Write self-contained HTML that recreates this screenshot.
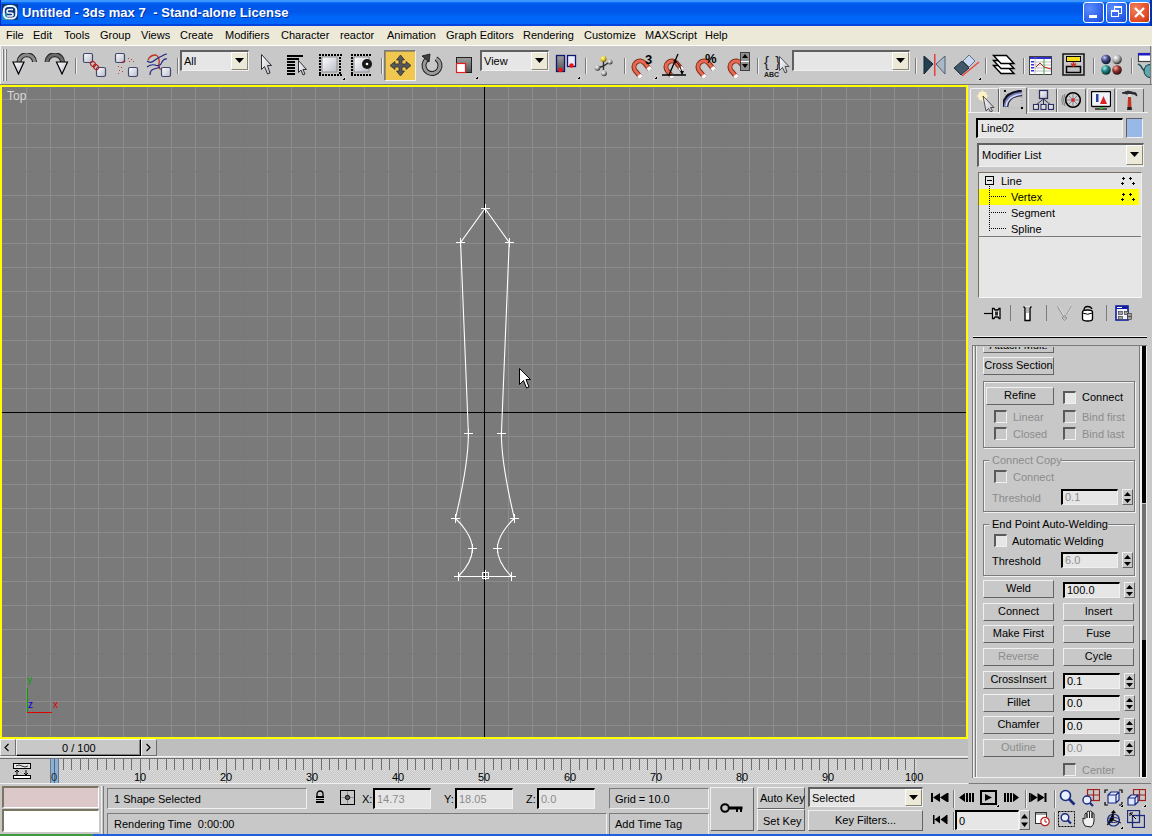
<!DOCTYPE html><html><head><meta charset="utf-8"><style>
*{margin:0;padding:0;box-sizing:border-box}
html,body{width:1152px;height:836px;overflow:hidden;background:#c8c8c8;font-family:"Liberation Sans",sans-serif;font-size:11px;position:relative}
div{position:absolute}
.t{white-space:nowrap;line-height:1}
.btn{background:#c8c8c8;border-top:1px solid #f0f0f0;border-left:1px solid #f0f0f0;border-bottom:1px solid #646464;border-right:1px solid #646464}
.fld{background:#e6e6e6;border-top:2px solid #000;border-left:2px solid #000;border-bottom:1px solid #f0f0f0;border-right:1px solid #f0f0f0}
.sunk{border-top:1px solid #7a7a7a;border-left:1px solid #7a7a7a;border-bottom:1px solid #f0f0f0;border-right:1px solid #f0f0f0}
</style></head><body>
<div style="left:0;top:0;width:1152px;height:26px;background:linear-gradient(#3d95ff 0,#3d95ff 2px,#1a7af8 2px,#0062f4 3px,#0058ea 5px,#0058ea 12px,#005eee 14px,#0066fa 17px,#0066fa 24px,#0048e0 24px,#0040d8 26px)"></div>
<div style="left:0;top:0;width:1px;height:26px;background:#0028c0"></div>
<div style="left:1150px;top:0;width:2px;height:26px;background:#0030b0"></div>
<svg style="position:absolute;left:2px;top:4px" width="16" height="16"><rect x="0" y="0" width="16" height="16" fill="#0c3a78"/><rect x="0" y="9" width="5" height="7" fill="#1890b8"/><rect x="1.8" y="2" width="12.5" height="12.5" rx="4.5" fill="none" stroke="#f0f4ff" stroke-width="2"/><path d="M11 5.5H7Q5 5.5 5 7.5Q5 9 7 9H9Q11 9 11 10.5Q11 12 9 12H5" fill="none" stroke="#f0f4ff" stroke-width="1.6"/></svg>
<div class="t" style="left:22px;top:6px;font-size:13px;color:#fff;font-weight:bold;letter-spacing:0.05px;text-shadow:1px 1px 0 #0030a0">Untitled - 3ds max 7 &nbsp;- Stand-alone License</div>
<div style="left:1083px;top:2px;width:21px;height:21px;border:1px solid #fff;border-radius:3px;background:radial-gradient(circle at 30% 30%,#5a8cff,#2a5ee8 70%,#1c48d0)"></div>
<div style="left:1106px;top:2px;width:21px;height:21px;border:1px solid #fff;border-radius:3px;background:radial-gradient(circle at 30% 30%,#5a8cff,#2a5ee8 70%,#1c48d0)"></div>
<div style="left:1089px;top:15px;width:8px;height:3px;background:#fff"></div>
<div style="left:1114px;top:6px;width:8px;height:8px;border:1px solid #fff;border-top-width:2px"></div>
<div style="left:1111px;top:10px;width:8px;height:7px;border:1px solid #fff;border-top-width:2px;background:#3a6cf0"></div>
<div style="left:1129px;top:2px;width:21px;height:21px;border:1px solid #fff;border-radius:3px;background:radial-gradient(circle at 30% 30%,#f08060,#e04820 70%,#c03010)"></div>
<svg style="position:absolute;left:1133px;top:6px" width="13" height="13"><path d="M2 2L11 11M11 2L2 11" stroke="#fff" stroke-width="2.2"/></svg>
<div style="left:0;top:26px;width:1152px;height:19px;background:#ece9d8"></div>
<div style="left:0;top:45px;width:1152px;height:1px;background:#fff"></div>
<div class="t" style="left:6px;top:30px;font-size:11px;color:#000;">File</div>
<div class="t" style="left:33px;top:30px;font-size:11px;color:#000;">Edit</div>
<div class="t" style="left:64px;top:30px;font-size:11px;color:#000;">Tools</div>
<div class="t" style="left:100px;top:30px;font-size:11px;color:#000;">Group</div>
<div class="t" style="left:141px;top:30px;font-size:11px;color:#000;">Views</div>
<div class="t" style="left:180px;top:30px;font-size:11px;color:#000;">Create</div>
<div class="t" style="left:225px;top:30px;font-size:11px;color:#000;">Modifiers</div>
<div class="t" style="left:281px;top:30px;font-size:11px;color:#000;">Character</div>
<div class="t" style="left:340px;top:30px;font-size:11px;color:#000;">reactor</div>
<div class="t" style="left:387px;top:30px;font-size:11px;color:#000;">Animation</div>
<div class="t" style="left:446px;top:30px;font-size:11px;color:#000;">Graph Editors</div>
<div class="t" style="left:523px;top:30px;font-size:11px;color:#000;">Rendering</div>
<div class="t" style="left:584px;top:30px;font-size:11px;color:#000;">Customize</div>
<div class="t" style="left:645px;top:30px;font-size:11px;color:#000;">MAXScript</div>
<div class="t" style="left:705px;top:30px;font-size:11px;color:#000;">Help</div>
<div style="left:0;top:46px;width:1152px;height:39px;background:#c8c8c8"></div>
<div style="left:0;top:46px;width:1px;height:38px;background:#f0f0f0"></div>
<div style="left:0;top:84px;width:1152px;height:1px;background:#7a7a7a"></div>
<div style="left:1150px;top:46px;width:1px;height:39px;background:#7a7a7a"></div>
<div style="left:2px;top:49px;width:2px;height:32px;border-left:1px solid #f0f0f0;border-right:1px solid #7a7a7a"></div>
<div style="left:5px;top:49px;width:2px;height:32px;border-left:1px solid #f0f0f0;border-right:1px solid #7a7a7a"></div>
<svg width="0" height="0" style="position:absolute"><defs><linearGradient id="gw" x1="0" y1="0" x2="1" y2="1"><stop offset="0" stop-color="#ffffff"/><stop offset="1" stop-color="#b8bcc8"/></linearGradient><linearGradient id="gd" x1="0" y1="0" x2="0" y2="1"><stop offset="0" stop-color="#a0a0a0"/><stop offset="1" stop-color="#505050"/></linearGradient><radialGradient id="sb" cx="0.35" cy="0.3" r="0.7"><stop offset="0" stop-color="#c0c8ff"/><stop offset="0.5" stop-color="#404880"/><stop offset="1" stop-color="#101830"/></radialGradient><radialGradient id="sw" cx="0.35" cy="0.3" r="0.7"><stop offset="0" stop-color="#ffffff"/><stop offset="0.6" stop-color="#a0a0a0"/><stop offset="1" stop-color="#303030"/></radialGradient><radialGradient id="sg" cx="0.35" cy="0.3" r="0.7"><stop offset="0" stop-color="#a0f0f0"/><stop offset="0.5" stop-color="#208080"/><stop offset="1" stop-color="#083030"/></radialGradient><radialGradient id="sr" cx="0.35" cy="0.3" r="0.7"><stop offset="0" stop-color="#ffb0a0"/><stop offset="0.5" stop-color="#903030"/><stop offset="1" stop-color="#301010"/></radialGradient><radialGradient id="sy" cx="0.35" cy="0.3" r="0.7"><stop offset="0" stop-color="#ffffc0"/><stop offset="0.6" stop-color="#e0c820"/><stop offset="1" stop-color="#806000"/></radialGradient></defs></svg>
<svg style="position:absolute;left:12px;top:53px" width="25" height="22"><path d="M22.5 9A7.5 7 0 0 0 7 9" fill="none" stroke="#202020" stroke-width="5"/><path d="M22.5 9A7.5 7 0 0 0 7 9" fill="none" stroke="#8a8a8a" stroke-width="3"/><path d="M1 9H12L6.5 21Z" fill="url(#gw)" stroke="#000" stroke-width="1.2"/></svg>
<svg style="position:absolute;left:44px;top:53px" width="25" height="22"><path d="M3 9A7.5 7 0 0 1 18.5 9" fill="none" stroke="#202020" stroke-width="5"/><path d="M3 9A7.5 7 0 0 1 18.5 9" fill="none" stroke="#6a6a6a" stroke-width="3"/><path d="M12.5 9H23.5L18 21Z" fill="url(#gw)" stroke="#000" stroke-width="1.2"/></svg>
<div style="left:75px;top:58px;width:2px;height:16px;border-left:1px solid #7a7a7a;border-right:1px solid #f0f0f0"></div>
<svg style="position:absolute;left:82px;top:52px" width="26" height="27"><rect x="1.5" y="1.5" width="9" height="9" rx="1.5" fill="url(#gw)" stroke="#404870" stroke-width="1.2"/><rect x="14.5" y="15.5" width="9" height="9" rx="1.5" fill="url(#gw)" stroke="#404870" stroke-width="1.2"/><ellipse cx="11" cy="12" rx="2.2" ry="2.8" transform="rotate(-45 11 12)" fill="none" stroke="#b02020" stroke-width="1.2"/><ellipse cx="14" cy="15" rx="2.2" ry="2.8" transform="rotate(-45 14 15)" fill="none" stroke="#b02020" stroke-width="1.2"/></svg>
<svg style="position:absolute;left:114px;top:52px" width="26" height="27"><rect x="1.5" y="1.5" width="9" height="9" rx="1.5" fill="url(#gw)" stroke="#404870" stroke-width="1.2"/><rect x="14.5" y="15.5" width="9" height="9" rx="1.5" fill="url(#gw)" stroke="#404870" stroke-width="1.2"/><path d="M8 11Q10 8 11 10" fill="none" stroke="#b02020" stroke-width="1.2"/><g fill="#c04040"><rect x="14" y="6" width="1" height="1"/><rect x="17" y="7" width="1" height="1"/><rect x="15" y="9" width="1" height="1"/><rect x="19" y="9" width="1" height="1"/><rect x="4" y="14" width="1" height="1"/><rect x="7" y="15" width="1" height="1"/><rect x="5" y="18" width="1" height="1"/><rect x="8" y="19" width="1" height="1"/><rect x="4" y="21" width="1" height="1"/></g></svg>
<svg style="position:absolute;left:146px;top:52px" width="26" height="27"><path d="M2 8Q4 3 10 3Q14 5 13 12Q12 18 16 17" fill="none" stroke="#c03020" stroke-width="1.3"/><path d="M1 9Q5 12 9 8Q13 5 16 4Q19 2 21 2" fill="none" stroke="#202880" stroke-width="1.2"/><path d="M1 15Q5 12 9 13Q14 15 16 10Q18 6 21 7" fill="none" stroke="#202880" stroke-width="1.2"/><path d="M4 23Q4 18 8 17Q12 16 14 15" fill="none" stroke="#202880" stroke-width="1.2"/><rect x="15.5" y="15.5" width="9" height="9" rx="1.5" fill="url(#gw)" stroke="#404870" stroke-width="1.2"/></svg>
<div style="left:177px;top:58px;width:2px;height:16px;border-left:1px solid #7a7a7a;border-right:1px solid #f0f0f0"></div>
<div style="left:180px;top:50px;width:69px;height:21px;background:#e6e6e6;border-top:2px solid #606060;border-left:2px solid #606060;border-bottom:1px solid #f0f0f0;border-right:1px solid #f0f0f0"></div>
<div class="t" style="left:184px;top:56px;font-size:11px;color:#000;">All</div>
<div style="left:231px;top:52px;width:17px;height:18px;background:#ece9d8;border-top:1px solid #fff;border-left:1px solid #fff;border-bottom:1px solid #8a8674;border-right:1px solid #8a8674"></div>
<svg style="position:absolute;left:235px;top:58px" width="9" height="5"><path d="M0 0H9L4.5 5Z" fill="#000"/></svg>
<svg style="position:absolute;left:259px;top:53px" width="16" height="24"><path d="M2.5 1.5V16.5L5.5 13.5L8.5 21L11 20L8.5 12.5H12.5Z" fill="url(#gw)" stroke="#303030" stroke-width="1"/></svg>
<svg style="position:absolute;left:286px;top:54px" width="24" height="23"><g fill="#000"><rect x="1" y="1" width="16" height="2"/><rect x="1" y="4" width="12" height="2"/><rect x="1" y="7" width="8" height="2"/><rect x="1" y="10" width="8" height="2"/><rect x="1" y="13" width="8" height="2"/><rect x="1" y="16" width="8" height="2"/><rect x="1" y="19" width="8" height="2"/></g><path d="M12.5 6.5V18.5L15 16L17 21L19 20L17 15.5H20.5Z" fill="url(#gw)" stroke="#303030" stroke-width="1"/></svg>
<svg style="position:absolute;left:318px;top:53px" width="25" height="24"><rect x="4" y="4" width="15" height="15" fill="url(#gw)" stroke="#909090"/><g fill="#000"><rect x="1" y="1" width="2" height="2"/><rect x="1" y="21" width="2" height="2"/><rect x="4" y="1" width="2" height="2"/><rect x="4" y="21" width="2" height="2"/><rect x="7" y="1" width="2" height="2"/><rect x="7" y="21" width="2" height="2"/><rect x="10" y="1" width="2" height="2"/><rect x="10" y="21" width="2" height="2"/><rect x="13" y="1" width="2" height="2"/><rect x="13" y="21" width="2" height="2"/><rect x="16" y="1" width="2" height="2"/><rect x="16" y="21" width="2" height="2"/><rect x="19" y="1" width="2" height="2"/><rect x="19" y="21" width="2" height="2"/><rect x="22" y="1" width="2" height="2"/><rect x="22" y="21" width="2" height="2"/><rect x="1" y="4" width="2" height="2"/><rect x="21" y="4" width="2" height="2"/><rect x="1" y="7" width="2" height="2"/><rect x="21" y="7" width="2" height="2"/><rect x="1" y="10" width="2" height="2"/><rect x="21" y="10" width="2" height="2"/><rect x="1" y="13" width="2" height="2"/><rect x="21" y="13" width="2" height="2"/><rect x="1" y="16" width="2" height="2"/><rect x="21" y="16" width="2" height="2"/><rect x="1" y="19" width="2" height="2"/><rect x="21" y="19" width="2" height="2"/></g></svg>
<svg style="position:absolute;left:341px;top:76px" width="5" height="5"><path d="M4.5 0.5V4.5H0.5Z" fill="#000" stroke="#fff" stroke-width="0.7"/></svg>
<svg style="position:absolute;left:350px;top:53px" width="25" height="24"><rect x="4" y="4" width="15" height="15" fill="url(#gw)" stroke="#909090"/><g fill="#000"><rect x="1" y="1" width="2" height="2"/><rect x="1" y="21" width="2" height="2"/><rect x="4" y="1" width="2" height="2"/><rect x="4" y="21" width="2" height="2"/><rect x="7" y="1" width="2" height="2"/><rect x="7" y="21" width="2" height="2"/><rect x="10" y="1" width="2" height="2"/><rect x="10" y="21" width="2" height="2"/><rect x="13" y="1" width="2" height="2"/><rect x="13" y="21" width="2" height="2"/><rect x="16" y="1" width="2" height="2"/><rect x="16" y="21" width="2" height="2"/><rect x="19" y="1" width="2" height="2"/><rect x="19" y="21" width="2" height="2"/><rect x="1" y="4" width="2" height="2"/><rect x="1" y="7" width="2" height="2"/><rect x="1" y="10" width="2" height="2"/><rect x="1" y="13" width="2" height="2"/><rect x="1" y="16" width="2" height="2"/><rect x="1" y="19" width="2" height="2"/></g><circle cx="17" cy="11" r="5" fill="#181818"/><circle cx="17" cy="11" r="1.3" fill="#fff"/></svg>
<div style="left:381px;top:58px;width:2px;height:16px;border-left:1px solid #7a7a7a;border-right:1px solid #f0f0f0"></div>
<div style="left:384px;top:50px;width:32px;height:31px;background:#f0c850;border-top:1px solid #7a7a7a;border-left:1px solid #7a7a7a;border-bottom:1px solid #f0f0f0;border-right:1px solid #f0f0f0;box-shadow:inset 1px 1px 0 #a09060"></div>
<svg style="position:absolute;left:389px;top:54px" width="23" height="23"><path d="M11.5 1L15.5 6H13V10H17V7.5L22 11.5L17 15.5V13H13V17H15.5L11.5 22L7.5 17H10V13H6V15.5L1 11.5L6 7.5V10H10V6H7.5Z" fill="#585858" stroke="#303030" stroke-width="0.8"/></svg>
<svg style="position:absolute;left:420px;top:53px" width="24" height="24"><circle cx="12" cy="12.5" r="8" fill="none" stroke="#202020" stroke-width="5" stroke-dasharray="42 8.3" transform="rotate(-60 12 12.5)"/><circle cx="12" cy="12.5" r="8" fill="none" stroke="#9a9a9a" stroke-width="3" stroke-dasharray="42 8.3" transform="rotate(-60 12 12.5)"/><path d="M2 3L10 1L9 9Z" fill="#404040" stroke="#101010" stroke-width="0.8"/></svg>
<svg style="position:absolute;left:455px;top:56px" width="18" height="18"><rect x="1.5" y="1.5" width="15" height="15" fill="url(#gd)" stroke="#202020"/><rect x="1.5" y="7.5" width="9" height="9" fill="#fff" stroke="#e02020" stroke-width="1.2"/></svg>
<svg style="position:absolute;left:474px;top:75px" width="5" height="5"><path d="M4.5 0.5V4.5H0.5Z" fill="#000" stroke="#fff" stroke-width="0.7"/></svg>
<div style="left:480px;top:50px;width:69px;height:21px;background:#e6e6e6;border-top:2px solid #606060;border-left:2px solid #606060;border-bottom:1px solid #f0f0f0;border-right:1px solid #f0f0f0"></div>
<div class="t" style="left:484px;top:56px;font-size:11px;color:#000;">View</div>
<div style="left:531px;top:52px;width:17px;height:18px;background:#ece9d8;border-top:1px solid #fff;border-left:1px solid #fff;border-bottom:1px solid #8a8674;border-right:1px solid #8a8674"></div>
<svg style="position:absolute;left:535px;top:58px" width="9" height="5"><path d="M0 0H9L4.5 5Z" fill="#000"/></svg>
<svg style="position:absolute;left:555px;top:54px" width="23" height="20"><rect x="1.5" y="1.5" width="8" height="16" fill="url(#gd)" stroke="#101870" stroke-width="1.3"/><rect x="12.5" y="1.5" width="8" height="11" fill="#e8ecf8" stroke="#101870" stroke-width="1.3"/><circle cx="5.5" cy="16" r="2.3" fill="#f01010"/><circle cx="16.5" cy="11.5" r="2.2" fill="#f01010"/></svg>
<svg style="position:absolute;left:576px;top:75px" width="5" height="5"><path d="M4.5 0.5V4.5H0.5Z" fill="#000" stroke="#fff" stroke-width="0.7"/></svg>
<div style="left:585px;top:58px;width:2px;height:16px;border-left:1px solid #7a7a7a;border-right:1px solid #f0f0f0"></div>
<svg style="position:absolute;left:594px;top:55px" width="21" height="22"><path d="M9.5 4V15M3.5 13L9.5 11L15.5 7" stroke="#303030" stroke-width="1.4" fill="none"/><circle cx="9.5" cy="4" r="3" fill="url(#sy)"/><circle cx="16" cy="7" r="2.5" fill="url(#sw)"/><circle cx="3.5" cy="13" r="2.8" fill="url(#sw)"/><circle cx="10" cy="18.5" r="2.8" fill="url(#sw)"/></svg>
<div style="left:624px;top:58px;width:2px;height:16px;border-left:1px solid #7a7a7a;border-right:1px solid #f0f0f0"></div>
<svg style="position:absolute;left:629px;top:56px" width="24" height="22"><g transform="rotate(-40 11 11)"><path d="M5 19V11A6 6 0 0 1 17 11V19" fill="none" stroke="#803020" stroke-width="5"/><path d="M5 19V11A6 6 0 0 1 17 11V19" fill="none" stroke="#e86850" stroke-width="3"/><rect x="2.8" y="16.5" width="4.4" height="3" fill="#fff"/><rect x="14.8" y="16.5" width="4.4" height="3" fill="#fff"/></g></svg>
<div class="t" style="left:645px;top:53px;font-size:13px;font-weight:bold">3</div>
<svg style="position:absolute;left:653px;top:75px" width="5" height="5"><path d="M4.5 0.5V4.5H0.5Z" fill="#000" stroke="#fff" stroke-width="0.7"/></svg>
<svg style="position:absolute;left:661px;top:56px" width="24" height="22"><g transform="rotate(-40 11 11)"><path d="M5 19V11A6 6 0 0 1 17 11V19" fill="none" stroke="#803020" stroke-width="5"/><path d="M5 19V11A6 6 0 0 1 17 11V19" fill="none" stroke="#e86850" stroke-width="3"/><rect x="2.8" y="16.5" width="4.4" height="3" fill="#fff"/><rect x="14.8" y="16.5" width="4.4" height="3" fill="#fff"/></g></svg>
<svg style="position:absolute;left:660px;top:52px" width="28" height="25"><path d="M2 23H26M9 23L18 2" stroke="#000" stroke-width="1.3" fill="none"/><path d="M15 9Q21 13 22 22" fill="none" stroke="#000" stroke-width="1"/><path d="M13 8L17 9L15 12Z M20 19L22 23L24 19Z" fill="#000"/></svg>
<svg style="position:absolute;left:693px;top:56px" width="24" height="22"><g transform="rotate(-40 11 11)"><path d="M5 19V11A6 6 0 0 1 17 11V19" fill="none" stroke="#803020" stroke-width="5"/><path d="M5 19V11A6 6 0 0 1 17 11V19" fill="none" stroke="#e86850" stroke-width="3"/><rect x="2.8" y="16.5" width="4.4" height="3" fill="#fff"/><rect x="14.8" y="16.5" width="4.4" height="3" fill="#fff"/></g></svg>
<div class="t" style="left:705px;top:52px;font-size:13px;font-weight:bold">%</div>
<svg style="position:absolute;left:725px;top:56px" width="24" height="22"><g transform="rotate(-40 11 11)"><path d="M5 19V11A6 6 0 0 1 17 11V19" fill="none" stroke="#803020" stroke-width="5"/><path d="M5 19V11A6 6 0 0 1 17 11V19" fill="none" stroke="#e86850" stroke-width="3"/><rect x="2.8" y="16.5" width="4.4" height="3" fill="#fff"/><rect x="14.8" y="16.5" width="4.4" height="3" fill="#fff"/></g></svg>
<svg style="position:absolute;left:740px;top:52px" width="10" height="20"><rect x="0.5" y="0.5" width="9" height="18" fill="#909090" stroke="#404040"/><path d="M2 6L5 2L8 6ZM2 12L5 16L8 12Z" fill="#000"/><rect x="1" y="9" width="8" height="1" fill="#fff"/></svg>
<div style="left:757px;top:58px;width:2px;height:16px;border-left:1px solid #7a7a7a;border-right:1px solid #f0f0f0"></div>
<div class="t" style="left:764px;top:54px;font-size:15px;color:#202020;letter-spacing:1px">{ }</div>
<div class="t" style="left:764px;top:71px;font-size:7px;font-weight:bold;color:#202020">ABC</div>
<svg style="position:absolute;left:778px;top:55px" width="12" height="22"><path d="M1.5 1.5V15.5L4.5 12.5L7 18L9 17L7 11.5H11Z" fill="url(#gw)" stroke="#404040" stroke-width="0.9"/></svg>
<div style="left:792px;top:50px;width:118px;height:21px;background:#e6e6e6;border-top:2px solid #606060;border-left:2px solid #606060;border-bottom:1px solid #f0f0f0;border-right:1px solid #f0f0f0"></div>
<div style="left:892px;top:52px;width:17px;height:18px;background:#ece9d8;border-top:1px solid #fff;border-left:1px solid #fff;border-bottom:1px solid #8a8674;border-right:1px solid #8a8674"></div>
<svg style="position:absolute;left:896px;top:58px" width="9" height="5"><path d="M0 0H9L4.5 5Z" fill="#000"/></svg>
<div style="left:915px;top:58px;width:2px;height:16px;border-left:1px solid #7a7a7a;border-right:1px solid #f0f0f0"></div>
<svg style="position:absolute;left:922px;top:53px" width="25" height="24"><path d="M2 3L11 11L2 21Z" fill="#204050" stroke="#102030" stroke-width="1"/><path d="M23 3L14 11L23 21Z" fill="#a8b8c8" stroke="#506070" stroke-width="1"/><rect x="12" y="1" width="1.5" height="22" fill="#e04040"/></svg>
<svg style="position:absolute;left:953px;top:53px" width="27" height="24"><path d="M1 15L9 8L16 15L8 22Z" fill="#405868" stroke="#203040"/><path d="M10 8L16 2L22 8L16 14Z" fill="#c8d8f0" stroke="#607080"/><path d="M9 23L26 9" stroke="#f04040" stroke-width="1.3"/></svg>
<svg style="position:absolute;left:977px;top:76px" width="5" height="5"><path d="M4.5 0.5V4.5H0.5Z" fill="#000" stroke="#fff" stroke-width="0.7"/></svg>
<div style="left:985px;top:58px;width:2px;height:16px;border-left:1px solid #7a7a7a;border-right:1px solid #f0f0f0"></div>
<svg style="position:absolute;left:988px;top:50px" width="30" height="28"><g stroke="#000" stroke-width="1.4" fill="#fff" stroke-linejoin="miter"><path d="M5.5 15.5H18.5L26 23.5H13Z"/><path d="M5.5 10.5H18.5L26 18.5H13Z"/><path d="M5.5 5.5H18.5L26 13.5H13Z"/></g></svg>
<div style="left:1023px;top:58px;width:2px;height:16px;border-left:1px solid #7a7a7a;border-right:1px solid #f0f0f0"></div>
<svg style="position:absolute;left:1029px;top:56px" width="24" height="20"><rect x="0.5" y="0.5" width="22" height="18" fill="#fff" stroke="#404040"/><rect x="1" y="1" width="21" height="2" fill="#3030d0"/><g fill="#3030d0"><rect x="2" y="5" width="3" height="1.5"/><rect x="2" y="8" width="3" height="1.5"/><rect x="2" y="11" width="3" height="1.5"/><rect x="2" y="14" width="3" height="1.5"/></g><g stroke="#909090" stroke-width="0.6"><path d="M6 1V19M6 6H22M6 9H22M6 12H22M6 15H22"/></g><path d="M15 3V19" stroke="#30b030" stroke-width="1"/><path d="M7 11L11 7L15 11L22 13" fill="none" stroke="#c02020" stroke-width="1"/></svg>
<svg style="position:absolute;left:1062px;top:53px" width="24" height="24"><rect x="1" y="1" width="21" height="21" fill="none" stroke="#202020" stroke-width="1.6"/><rect x="4.5" y="3.5" width="14" height="5" fill="#f8e020" stroke="#000" stroke-width="1"/><rect x="4.5" y="13.5" width="14" height="6" fill="#c0c0c0" stroke="#000" stroke-width="1.5"/><path d="M11.5 9V12M9 10.5L11.5 13L14 10.5" stroke="#d03020" stroke-width="1.6" fill="none"/></svg>
<div style="left:1093px;top:58px;width:2px;height:16px;border-left:1px solid #7a7a7a;border-right:1px solid #f0f0f0"></div>
<svg style="position:absolute;left:1100px;top:54px" width="24" height="22"><circle cx="6" cy="5.5" r="4.8" fill="url(#sb)"/><circle cx="17" cy="5.5" r="4.8" fill="url(#sw)"/><circle cx="6" cy="16" r="4.8" fill="url(#sg)"/><circle cx="17" cy="16" r="4.8" fill="url(#sr)"/></svg>
<div style="left:1131px;top:58px;width:2px;height:16px;border-left:1px solid #7a7a7a;border-right:1px solid #f0f0f0"></div>
<svg style="position:absolute;left:1137px;top:52px" width="13" height="26"><rect x="1.5" y="1.5" width="13" height="8" fill="#fff" stroke="#404040" stroke-width="1.2"/><rect x="1" y="1" width="13" height="2.5" fill="#2020c0"/><path d="M1 12Q4 13 5 16Q7 19 8 18" fill="none" stroke="#205060" stroke-width="1.6"/><ellipse cx="13" cy="19" rx="6" ry="6.5" fill="#60a8b0" stroke="#103030" stroke-width="1"/><path d="M8 14L11 13" stroke="#208080" stroke-width="1"/></svg>
<div style="left:0;top:85px;width:968px;height:654px;background:#ffff00"></div>
<div style="left:2px;top:87px;width:964px;height:650px;background:#7a7a7a;overflow:hidden">
<svg width="964" height="650" style="position:absolute;left:0;top:0" shape-rendering="crispEdges"><rect x="24" y="0" width="1" height="650" fill="#8c8c8c"/><rect x="48" y="0" width="1" height="650" fill="#8c8c8c"/><rect x="72" y="0" width="1" height="650" fill="#8c8c8c"/><rect x="96" y="0" width="1" height="650" fill="#8c8c8c"/><rect x="121" y="0" width="1" height="650" fill="#8c8c8c"/><rect x="145" y="0" width="1" height="650" fill="#8c8c8c"/><rect x="169" y="0" width="1" height="650" fill="#8c8c8c"/><rect x="193" y="0" width="1" height="650" fill="#8c8c8c"/><rect x="217" y="0" width="1" height="650" fill="#8c8c8c"/><rect x="241" y="0" width="1" height="650" fill="#787878"/><rect x="265" y="0" width="1" height="650" fill="#8c8c8c"/><rect x="289" y="0" width="1" height="650" fill="#8c8c8c"/><rect x="313" y="0" width="1" height="650" fill="#8c8c8c"/><rect x="337" y="0" width="1" height="650" fill="#8c8c8c"/><rect x="362" y="0" width="1" height="650" fill="#8c8c8c"/><rect x="386" y="0" width="1" height="650" fill="#8c8c8c"/><rect x="410" y="0" width="1" height="650" fill="#8c8c8c"/><rect x="434" y="0" width="1" height="650" fill="#8c8c8c"/><rect x="458" y="0" width="1" height="650" fill="#8c8c8c"/><rect x="506" y="0" width="1" height="650" fill="#8c8c8c"/><rect x="530" y="0" width="1" height="650" fill="#8c8c8c"/><rect x="554" y="0" width="1" height="650" fill="#8c8c8c"/><rect x="578" y="0" width="1" height="650" fill="#8c8c8c"/><rect x="603" y="0" width="1" height="650" fill="#8c8c8c"/><rect x="627" y="0" width="1" height="650" fill="#8c8c8c"/><rect x="651" y="0" width="1" height="650" fill="#8c8c8c"/><rect x="675" y="0" width="1" height="650" fill="#8c8c8c"/><rect x="699" y="0" width="1" height="650" fill="#8c8c8c"/><rect x="723" y="0" width="1" height="650" fill="#787878"/><rect x="747" y="0" width="1" height="650" fill="#8c8c8c"/><rect x="771" y="0" width="1" height="650" fill="#8c8c8c"/><rect x="795" y="0" width="1" height="650" fill="#8c8c8c"/><rect x="819" y="0" width="1" height="650" fill="#8c8c8c"/><rect x="844" y="0" width="1" height="650" fill="#8c8c8c"/><rect x="868" y="0" width="1" height="650" fill="#8c8c8c"/><rect x="892" y="0" width="1" height="650" fill="#8c8c8c"/><rect x="916" y="0" width="1" height="650" fill="#8c8c8c"/><rect x="940" y="0" width="1" height="650" fill="#8c8c8c"/><rect x="0" y="12" width="964" height="1" fill="#8c8c8c"/><rect x="0" y="36" width="964" height="1" fill="#8c8c8c"/><rect x="0" y="60" width="964" height="1" fill="#8c8c8c"/><rect x="0" y="84" width="964" height="1" fill="#787878"/><rect x="0" y="108" width="964" height="1" fill="#8c8c8c"/><rect x="0" y="132" width="964" height="1" fill="#8c8c8c"/><rect x="0" y="156" width="964" height="1" fill="#8c8c8c"/><rect x="0" y="180" width="964" height="1" fill="#8c8c8c"/><rect x="0" y="204" width="964" height="1" fill="#8c8c8c"/><rect x="0" y="229" width="964" height="1" fill="#8c8c8c"/><rect x="0" y="253" width="964" height="1" fill="#8c8c8c"/><rect x="0" y="277" width="964" height="1" fill="#8c8c8c"/><rect x="0" y="301" width="964" height="1" fill="#8c8c8c"/><rect x="0" y="349" width="964" height="1" fill="#8c8c8c"/><rect x="0" y="373" width="964" height="1" fill="#8c8c8c"/><rect x="0" y="397" width="964" height="1" fill="#8c8c8c"/><rect x="0" y="421" width="964" height="1" fill="#8c8c8c"/><rect x="0" y="445" width="964" height="1" fill="#8c8c8c"/><rect x="0" y="470" width="964" height="1" fill="#8c8c8c"/><rect x="0" y="494" width="964" height="1" fill="#8c8c8c"/><rect x="0" y="518" width="964" height="1" fill="#8c8c8c"/><rect x="0" y="542" width="964" height="1" fill="#8c8c8c"/><rect x="0" y="566" width="964" height="1" fill="#787878"/><rect x="0" y="590" width="964" height="1" fill="#8c8c8c"/><rect x="0" y="614" width="964" height="1" fill="#8c8c8c"/><rect x="0" y="638" width="964" height="1" fill="#8c8c8c"/><rect x="482" y="0" width="1" height="650" fill="#000"/><rect x="0" y="325" width="964" height="1" fill="#000"/></svg>
</div>
<svg style="position:absolute;left:0;top:0" width="968" height="739"><path d="M485 576.5 H511.5 C506 571 497.4 560 497.4 548.6 C497.4 537 508 524 514.4 518.5 C510 500 501.4 460 501.4 433.7 L509.2 242.4 L485 208.5" fill="none" stroke="#fff" stroke-width="1.1"/><path d="M485 576.5 H458.3 C463.8 571 472.4 560 472.4 548.6 C472.4 537 461.8 524 455.4 518.5 C459.8 500 468.4 460 468.4 433.7 L460.6 242.4 L485 208.5" fill="none" stroke="#fff" stroke-width="1.1"/><rect x="481" y="208" width="9" height="1" fill="#fff" shape-rendering="crispEdges"/><rect x="485" y="204" width="1" height="9" fill="#fff" shape-rendering="crispEdges"/><rect x="505" y="242" width="9" height="1" fill="#fff" shape-rendering="crispEdges"/><rect x="509" y="238" width="1" height="9" fill="#fff" shape-rendering="crispEdges"/><rect x="456" y="242" width="9" height="1" fill="#fff" shape-rendering="crispEdges"/><rect x="460" y="238" width="1" height="9" fill="#fff" shape-rendering="crispEdges"/><rect x="497" y="433" width="9" height="1" fill="#fff" shape-rendering="crispEdges"/><rect x="501" y="429" width="1" height="9" fill="#fff" shape-rendering="crispEdges"/><rect x="464" y="433" width="9" height="1" fill="#fff" shape-rendering="crispEdges"/><rect x="468" y="429" width="1" height="9" fill="#fff" shape-rendering="crispEdges"/><rect x="510" y="518" width="9" height="1" fill="#fff" shape-rendering="crispEdges"/><rect x="514" y="514" width="1" height="9" fill="#fff" shape-rendering="crispEdges"/><rect x="451" y="518" width="9" height="1" fill="#fff" shape-rendering="crispEdges"/><rect x="455" y="514" width="1" height="9" fill="#fff" shape-rendering="crispEdges"/><rect x="493" y="548" width="9" height="1" fill="#fff" shape-rendering="crispEdges"/><rect x="497" y="544" width="1" height="9" fill="#fff" shape-rendering="crispEdges"/><rect x="468" y="548" width="9" height="1" fill="#fff" shape-rendering="crispEdges"/><rect x="472" y="544" width="1" height="9" fill="#fff" shape-rendering="crispEdges"/><rect x="507" y="576" width="9" height="1" fill="#fff" shape-rendering="crispEdges"/><rect x="511" y="572" width="1" height="9" fill="#fff" shape-rendering="crispEdges"/><rect x="454" y="576" width="9" height="1" fill="#fff" shape-rendering="crispEdges"/><rect x="458" y="572" width="1" height="9" fill="#fff" shape-rendering="crispEdges"/><rect x="482.5" y="572.5" width="6" height="6" fill="none" stroke="#fff" shape-rendering="crispEdges"/><rect x="485" y="570" width="1" height="10" fill="#fff"/></svg>
<div class="t" style="left:7px;top:90px;font-size:12px;color:#d8d8d8;">Top</div>
<svg style="position:absolute;left:20px;top:670px" width="45" height="50" shape-rendering="crispEdges"><rect x="7" y="18" width="1" height="25" fill="#00a000"/><rect x="7" y="42" width="25" height="1" fill="#e00000"/></svg>
<div class="t" style="left:27px;top:675px;font-size:10px;color:#00a000;">y</div>
<div class="t" style="left:28px;top:700px;font-size:10px;color:#0000e0;">z</div>
<div class="t" style="left:53px;top:700px;font-size:10px;color:#e00000;">x</div>
<svg style="position:absolute;left:519px;top:368px" width="13" height="21"><path d="M0.5 0.5V16.5L4.5 12.5L7.5 20L10 19L7 11.5H11.5Z" fill="#fff" stroke="#000" stroke-width="1"/></svg>
<div style="left:968px;top:112px;width:180px;height:1px;background:#f0f0f0"></div>
<div style="left:970px;top:88px;width:29px;height:24px;background:#c8c8c8;border-top:1px solid #f0f0f0;border-left:1px solid #f0f0f0;border-right:1px solid #646464;border-radius:2px 2px 0 0"></div>
<div style="left:999px;top:87px;width:28px;height:27px;background:#c8c8c8;border-top:1px solid #f0f0f0;border-left:1px solid #f0f0f0;border-right:1px solid #646464;border-radius:2px 2px 0 0"></div>
<div style="left:1028px;top:88px;width:29px;height:24px;background:#c8c8c8;border-top:1px solid #f0f0f0;border-left:1px solid #f0f0f0;border-right:1px solid #646464;border-radius:2px 2px 0 0"></div>
<div style="left:1057px;top:88px;width:29px;height:24px;background:#c8c8c8;border-top:1px solid #f0f0f0;border-left:1px solid #f0f0f0;border-right:1px solid #646464;border-radius:2px 2px 0 0"></div>
<div style="left:1087px;top:88px;width:28px;height:24px;background:#c8c8c8;border-top:1px solid #f0f0f0;border-left:1px solid #f0f0f0;border-right:1px solid #646464;border-radius:2px 2px 0 0"></div>
<div style="left:1116px;top:88px;width:28px;height:24px;background:#c8c8c8;border-top:1px solid #f0f0f0;border-left:1px solid #f0f0f0;border-right:1px solid #646464;border-radius:2px 2px 0 0"></div>
<svg style="position:absolute;left:976px;top:90px" width="22" height="22"><circle cx="6.5" cy="6" r="4.5" fill="#fff8d8" opacity="0.9"/><path d="M6.5 0V12M0.5 6H12.5M2.5 2L10.5 10M10.5 2L2.5 10" stroke="#fff0b0" stroke-width="1"/><path d="M7 6L18 17.5L14.5 17.5L16.5 21L14.5 22L12.5 18.5L10 21Z" fill="url(#gw)" stroke="#404040" stroke-width="0.9"/></svg>
<svg style="position:absolute;left:1003px;top:90px" width="22" height="20"><path d="M2 17Q2 4 19 3" fill="none" stroke="#101020" stroke-width="6.5"/><path d="M2.5 17Q3 5 19 3.5" fill="none" stroke="#7880b8" stroke-width="3.5"/><path d="M3 16Q4 6 19 4" fill="none" stroke="#e0e4ff" stroke-width="1.2"/><rect x="1" y="0" width="2" height="2" fill="#000"/><rect x="18" y="17" width="2" height="2" fill="#000"/><path d="M2 1V18M2 18H19M19 1V18" stroke="#808080" stroke-width="0.5" stroke-dasharray="1 2"/></svg>
<svg style="position:absolute;left:1032px;top:89px" width="23" height="22"><rect x="7.5" y="1.5" width="8" height="8" fill="url(#gw)" stroke="#303060" stroke-width="1.3"/><path d="M11.5 10V16M11.5 10L4 16M11.5 10L19 16" stroke="#303050" stroke-width="1"/><rect x="1.5" y="15.5" width="5" height="5" fill="url(#gw)" stroke="#303060" stroke-width="1.1"/><rect x="9" y="15.5" width="5" height="5" fill="url(#gw)" stroke="#303060" stroke-width="1.1"/><rect x="16.5" y="15.5" width="5" height="5" fill="url(#gw)" stroke="#303060" stroke-width="1.1"/></svg>
<svg style="position:absolute;left:1061px;top:91px" width="22" height="18"><circle cx="12" cy="9" r="7.3" fill="#d0d0d0" stroke="#000" stroke-width="1.6"/><path d="M12 3V15M6 9H18M7.8 4.8L16.2 13.2M16.2 4.8L7.8 13.2" stroke="#707080" stroke-width="0.8"/><circle cx="12" cy="9" r="1.8" fill="#e02020"/><path d="M4 3Q1 9 4 15M2 4Q-0.5 9 2 14" fill="none" stroke="#606060" stroke-width="0.7"/></svg>
<svg style="position:absolute;left:1091px;top:91px" width="20" height="20"><rect x="0.5" y="0.5" width="19" height="15" rx="1" fill="#fff" stroke="#000" stroke-width="1.3"/><rect x="2" y="2" width="16" height="12" fill="#f0f4ff"/><rect x="5" y="3" width="2.5" height="8" fill="#3040a0"/><path d="M9 13L12.5 5L16 13Z" fill="#e02020"/><rect x="4" y="17" width="12" height="2" fill="#505050"/><rect x="9" y="16" width="3" height="2" fill="#30c030"/></svg>
<svg style="position:absolute;left:1121px;top:90px" width="18" height="21"><path d="M1 3L7 1L15 3L16 6L13 4L10 4L9 5H7L6 4Z" fill="#303040" stroke="#202020" stroke-width="0.8"/><rect x="6.5" y="4" width="4" height="3" fill="#d8d8d8"/><path d="M7 7H10L10.5 18H6.5Z" fill="#c03820"/><path d="M6.5 17H10.5L11 20H6Z" fill="#202020"/></svg>
<div class="fld" style="left:976px;top:118px;width:147px;height:20px"></div>
<div class="t" style="left:981px;top:123px;font-size:11px;color:#000;">Line02</div>
<div style="left:1126px;top:118px;width:17px;height:20px;background:#98b8e8;border-top:1px solid #606060;border-left:1px solid #606060;border-bottom:1px solid #f0f0f0;border-right:1px solid #f0f0f0"></div>
<div style="left:977px;top:143px;width:167px;height:24px;background:#e6e6e6;border-top:2px solid #606060;border-left:2px solid #606060;border-bottom:1px solid #f0f0f0;border-right:1px solid #f0f0f0"></div>
<div class="t" style="left:982px;top:150px;font-size:11px;color:#000;">Modifier List</div>
<div style="left:1126px;top:145px;width:17px;height:20px;background:#ece9d8;border-top:1px solid #fff;border-left:1px solid #fff;border-bottom:1px solid #8a8674;border-right:1px solid #8a8674"></div>
<svg style="position:absolute;left:1130px;top:152px" width="9" height="5"><path d="M0 0H9L4.5 5Z" fill="#000"/></svg>
<div style="left:978px;top:172px;width:164px;height:126px;background:#e6e6e6;border-top:1px solid #7a7060;border-left:1px solid #7a7060;border-bottom:1px solid #f8f8f8;border-right:1px solid #f0f0f0"></div>
<div style="left:979px;top:189px;width:160px;height:16px;background:#ffff00"></div>
<div style="left:978px;top:236px;width:163px;height:1px;background:#7a7a7a"></div>
<div style="left:985px;top:176px;width:9px;height:9px;border:1px solid #000;background:#e6e6e6"></div>
<div style="left:987px;top:180px;width:5px;height:1px;background:#000"></div>
<svg style="position:absolute;left:988px;top:185px" width="20" height="50" shape-rendering="crispEdges"><rect x="1" y="1" width="1" height="1" fill="#000"/><rect x="1" y="3" width="1" height="1" fill="#000"/><rect x="1" y="5" width="1" height="1" fill="#000"/><rect x="1" y="7" width="1" height="1" fill="#000"/><rect x="1" y="9" width="1" height="1" fill="#000"/><rect x="1" y="11" width="1" height="1" fill="#000"/><rect x="1" y="13" width="1" height="1" fill="#000"/><rect x="1" y="15" width="1" height="1" fill="#000"/><rect x="1" y="17" width="1" height="1" fill="#000"/><rect x="1" y="19" width="1" height="1" fill="#000"/><rect x="1" y="21" width="1" height="1" fill="#000"/><rect x="1" y="23" width="1" height="1" fill="#000"/><rect x="1" y="25" width="1" height="1" fill="#000"/><rect x="1" y="27" width="1" height="1" fill="#000"/><rect x="1" y="29" width="1" height="1" fill="#000"/><rect x="1" y="31" width="1" height="1" fill="#000"/><rect x="1" y="33" width="1" height="1" fill="#000"/><rect x="1" y="35" width="1" height="1" fill="#000"/><rect x="1" y="37" width="1" height="1" fill="#000"/><rect x="1" y="39" width="1" height="1" fill="#000"/><rect x="1" y="41" width="1" height="1" fill="#000"/><rect x="1" y="43" width="1" height="1" fill="#000"/><rect x="1" y="45" width="1" height="1" fill="#000"/><rect x="3" y="11" width="1" height="1" fill="#000"/><rect x="5" y="11" width="1" height="1" fill="#000"/><rect x="7" y="11" width="1" height="1" fill="#000"/><rect x="9" y="11" width="1" height="1" fill="#000"/><rect x="11" y="11" width="1" height="1" fill="#000"/><rect x="13" y="11" width="1" height="1" fill="#000"/><rect x="15" y="11" width="1" height="1" fill="#000"/><rect x="17" y="11" width="1" height="1" fill="#000"/><rect x="3" y="27" width="1" height="1" fill="#000"/><rect x="5" y="27" width="1" height="1" fill="#000"/><rect x="7" y="27" width="1" height="1" fill="#000"/><rect x="9" y="27" width="1" height="1" fill="#000"/><rect x="11" y="27" width="1" height="1" fill="#000"/><rect x="13" y="27" width="1" height="1" fill="#000"/><rect x="15" y="27" width="1" height="1" fill="#000"/><rect x="17" y="27" width="1" height="1" fill="#000"/><rect x="3" y="43" width="1" height="1" fill="#000"/><rect x="5" y="43" width="1" height="1" fill="#000"/><rect x="7" y="43" width="1" height="1" fill="#000"/><rect x="9" y="43" width="1" height="1" fill="#000"/><rect x="11" y="43" width="1" height="1" fill="#000"/><rect x="13" y="43" width="1" height="1" fill="#000"/><rect x="15" y="43" width="1" height="1" fill="#000"/><rect x="17" y="43" width="1" height="1" fill="#000"/></svg>
<div class="t" style="left:1001px;top:176px;font-size:11px;color:#000;">Line</div>
<div class="t" style="left:1011px;top:192px;font-size:11px;color:#000;">Vertex</div>
<div class="t" style="left:1011px;top:208px;font-size:11px;color:#000;">Segment</div>
<div class="t" style="left:1011px;top:224px;font-size:11px;color:#000;">Spline</div>
<svg style="position:absolute;left:1120px;top:176px" width="16" height="10"><path d="M2.0 2.5H5.0M3.5 1.0V4.0" stroke="#000" stroke-width="1"/><path d="M9.0 2.5H12.0M10.5 1.0V4.0" stroke="#000" stroke-width="1"/><path d="M1.0 7.5H4.0M2.5 6.0V9.0" stroke="#000" stroke-width="1"/><path d="M12.0 7.5H15.0M13.5 6.0V9.0" stroke="#000" stroke-width="1"/></svg>
<svg style="position:absolute;left:1120px;top:192px" width="16" height="10"><path d="M2.0 2.5H5.0M3.5 1.0V4.0" stroke="#000" stroke-width="1"/><path d="M9.0 2.5H12.0M10.5 1.0V4.0" stroke="#000" stroke-width="1"/><path d="M1.0 7.5H4.0M2.5 6.0V9.0" stroke="#000" stroke-width="1"/><path d="M12.0 7.5H15.0M13.5 6.0V9.0" stroke="#000" stroke-width="1"/></svg>
<div style="left:1010px;top:305px;width:1px;height:16px;background:#7a7a7a"></div>
<div style="left:1046px;top:305px;width:1px;height:16px;background:#7a7a7a"></div>
<div style="left:1106px;top:305px;width:1px;height:16px;background:#7a7a7a"></div>
<svg style="position:absolute;left:983px;top:305px" width="18" height="16"><path d="M1 8.5H9" stroke="#000" stroke-width="1.2"/><path d="M9.5 3.5H11L12 5H15L16 3.5H17V13.5H16L15 12H12L11 13.5H9.5Z" fill="#e8e8e8" stroke="#000" stroke-width="1.3"/><rect x="12" y="6.5" width="3" height="4" fill="#303030"/></svg>
<svg style="position:absolute;left:1022px;top:305px" width="11" height="17"><path d="M1.5 1.5L3 3V15.5H8V3L9.5 1.5" fill="#fff" stroke="#000" stroke-width="1.4"/><g fill="#707070"><rect x="3.5" y="2" width="1" height="1"/><rect x="5.5" y="2" width="1" height="1"/><rect x="4.5" y="3" width="1" height="1"/><rect x="6.5" y="3" width="1" height="1"/><rect x="3.5" y="4" width="1" height="1"/><rect x="5.5" y="4" width="1" height="1"/><rect x="4.5" y="5" width="1" height="1"/><rect x="6.5" y="5" width="1" height="1"/><rect x="3.5" y="6" width="1" height="1"/><rect x="5.5" y="6" width="1" height="1"/><rect x="4.5" y="7" width="1" height="1"/><rect x="6.5" y="7" width="1" height="1"/></g></svg>
<svg style="position:absolute;left:1056px;top:305px" width="17" height="17"><path d="M1.5 1.5L8.5 13M15.5 1.5L8.5 13" stroke="#909090" stroke-width="1.1"/><path d="M2.5 1.5L9 12M16 2L9.5 12" stroke="#f0f0f0" stroke-width="0.6"/><path d="M8.5 10.5L11 13L8.5 15.5L6 13Z" fill="none" stroke="#909090" stroke-width="1"/></svg>
<svg style="position:absolute;left:1081px;top:305px" width="13" height="17"><path d="M3 5Q3 1.5 6.5 1.5Q10 1.5 11 4" fill="none" stroke="#000" stroke-width="1.3"/><path d="M1.5 7Q1.5 5 6.5 5Q11.5 5 11.5 7V14Q11.5 16 6.5 16Q1.5 16 1.5 14Z" fill="#fff" stroke="#000" stroke-width="1.3"/><path d="M1.5 8Q6.5 10.5 11.5 8" fill="none" stroke="#000" stroke-width="1"/></svg>
<svg style="position:absolute;left:1115px;top:305px" width="18" height="17"><rect x="1" y="1" width="12" height="14" fill="#f0f0ff" stroke="#1020a0" stroke-width="1.6"/><rect x="1" y="1" width="12" height="3" fill="#1020a0"/><rect x="2" y="2" width="5" height="1" fill="#fff"/><g fill="#a0a0a0" stroke="#303030" stroke-width="0.6"><rect x="3.5" y="6.5" width="4" height="3"/><rect x="9.5" y="6.5" width="4" height="3"/><rect x="3.5" y="11.5" width="4" height="3"/><rect x="12.5" y="11.5" width="4" height="3"/><rect x="12.5" y="8.5" width="4" height="3"/></g></svg>
<div style="left:973px;top:336px;width:174px;height:1px;background:#f0f0f0"></div>
<div style="left:973px;top:337px;width:174px;height:1px;background:#000"></div>
<div style="left:972px;top:345px;width:175px;height:433px;border-left:1px solid #7a7a7a;border-top:1px solid #7a7a7a"></div>
<div style="left:973px;top:346px;width:1px;height:431px;background:#f0f0f0"></div>
<div style="left:975px;top:346px;width:1px;height:431px;background:#7a7a7a"></div>
<div style="left:976px;top:346px;width:1px;height:431px;background:#f0f0f0"></div>
<div style="left:1139px;top:346px;width:1px;height:431px;background:#7a7a7a"></div>
<div style="left:1140px;top:346px;width:2px;height:431px;background:#f0f0f0"></div>
<div style="left:1142px;top:346px;width:4px;height:157px;background:#000"></div>
<div style="left:1142px;top:504px;width:4px;height:136px;background:#707070"></div>
<div style="left:1142px;top:640px;width:4px;height:137px;background:#000"></div>
<div style="left:1146px;top:346px;width:1px;height:431px;background:#f0f0f0"></div>
<div style="left:973px;top:777px;width:174px;height:1px;background:#f0f0f0"></div>
<div style="left:969px;top:783px;width:182px;height:1px;background:#7a7a7a"></div>
<div style="left:977px;top:347px;width:162px;height:8px;overflow:hidden"><div class="btn" style="left:6px;top:-12px;width:71px;height:18px"></div><div class="t" style="left:6px;top:-7px;width:71px;text-align:center">Attach Mult.</div></div>
<div class="btn" style="left:983px;top:357px;width:71px;height:18px"></div>
<div class="t" style="left:983px;top:360px;width:71px;text-align:center;color:#000">Cross Section</div>
<div style="left:983px;top:381px;width:152px;height:67px;border:1px solid #7a7a7a;box-shadow:inset 1px 1px 0 #f0f0f0, 1px 1px 0 #f0f0f0"></div>
<div class="btn" style="left:986px;top:387px;width:68px;height:18px"></div>
<div class="t" style="left:986px;top:390px;width:68px;text-align:center;color:#000">Refine</div>
<div style="left:1063px;top:391px;width:13px;height:13px;background:#e6e6e6;border-top:2px solid #5a5a5a;border-left:2px solid #5a5a5a;border-bottom:1px solid #f0f0f0;border-right:1px solid #f0f0f0"></div>
<div class="t" style="left:1082px;top:392px;font-size:11px;color:#000;">Connect</div>
<div style="left:994px;top:410px;width:13px;height:13px;background:#c8c8c8;border-top:2px solid #5a5a5a;border-left:2px solid #5a5a5a;border-bottom:1px solid #f0f0f0;border-right:1px solid #f0f0f0"></div>
<div class="t" style="left:1013px;top:412px;font-size:11px;color:#8c8c8c;">Linear</div>
<div style="left:994px;top:427px;width:13px;height:13px;background:#c8c8c8;border-top:2px solid #5a5a5a;border-left:2px solid #5a5a5a;border-bottom:1px solid #f0f0f0;border-right:1px solid #f0f0f0"></div>
<div class="t" style="left:1013px;top:429px;font-size:11px;color:#8c8c8c;">Closed</div>
<div style="left:1063px;top:410px;width:13px;height:13px;background:#c8c8c8;border-top:2px solid #5a5a5a;border-left:2px solid #5a5a5a;border-bottom:1px solid #f0f0f0;border-right:1px solid #f0f0f0"></div>
<div class="t" style="left:1082px;top:412px;font-size:11px;color:#8c8c8c;">Bind first</div>
<div style="left:1063px;top:427px;width:13px;height:13px;background:#c8c8c8;border-top:2px solid #5a5a5a;border-left:2px solid #5a5a5a;border-bottom:1px solid #f0f0f0;border-right:1px solid #f0f0f0"></div>
<div class="t" style="left:1082px;top:429px;font-size:11px;color:#8c8c8c;">Bind last</div>
<div style="left:983px;top:460px;width:152px;height:52px;border:1px solid #7a7a7a;box-shadow:inset 1px 1px 0 #f0f0f0, 1px 1px 0 #f0f0f0"></div>
<div style="left:989px;top:454px;width:72px;height:12px;background:#c8c8c8"></div>
<div class="t" style="left:992px;top:455px;font-size:11px;color:#8c8c8c;">Connect Copy</div>
<div style="left:994px;top:470px;width:13px;height:13px;background:#c8c8c8;border-top:2px solid #5a5a5a;border-left:2px solid #5a5a5a;border-bottom:1px solid #f0f0f0;border-right:1px solid #f0f0f0"></div>
<div class="t" style="left:1013px;top:472px;font-size:11px;color:#8c8c8c;">Connect</div>
<div class="t" style="left:992px;top:493px;font-size:11px;color:#8c8c8c;">Threshold</div>
<div class="fld" style="left:1061px;top:489px;width:57px;height:16px"></div>
<div class="t" style="left:1065px;top:492px;font-size:11px;color:#8c8c8c;">0.1</div>
<div style="left:1122px;top:489px;width:11px;height:16px;border-top:1px solid #f0f0f0;border-left:1px solid #f0f0f0;border-bottom:1px solid #646464;border-right:1px solid #646464"></div>
<svg style="position:absolute;left:1124px;top:492px" width="7" height="11"><path d="M0 4L3.5 0L7 4Z M0 7L3.5 11L7 7Z" fill="#000"/></svg>
<div style="left:983px;top:524px;width:152px;height:52px;border:1px solid #7a7a7a;box-shadow:inset 1px 1px 0 #f0f0f0, 1px 1px 0 #f0f0f0"></div>
<div style="left:989px;top:518px;width:119px;height:12px;background:#c8c8c8"></div>
<div class="t" style="left:992px;top:519px;font-size:11px;color:#000;">End Point Auto-Welding</div>
<div style="left:994px;top:534px;width:13px;height:13px;background:#e6e6e6;border-top:2px solid #5a5a5a;border-left:2px solid #5a5a5a;border-bottom:1px solid #f0f0f0;border-right:1px solid #f0f0f0"></div>
<div class="t" style="left:1012px;top:536px;font-size:11px;color:#000;">Automatic Welding</div>
<div class="t" style="left:992px;top:556px;font-size:11px;color:#000;">Threshold</div>
<div class="fld" style="left:1061px;top:552px;width:57px;height:16px"></div>
<div class="t" style="left:1065px;top:555px;font-size:11px;color:#8c8c8c;">6.0</div>
<div style="left:1122px;top:552px;width:11px;height:16px;border-top:1px solid #f0f0f0;border-left:1px solid #f0f0f0;border-bottom:1px solid #646464;border-right:1px solid #646464"></div>
<svg style="position:absolute;left:1124px;top:555px" width="7" height="11"><path d="M0 4L3.5 0L7 4Z M0 7L3.5 11L7 7Z" fill="#000"/></svg>
<div class="btn" style="left:983px;top:580px;width:71px;height:18px"></div>
<div class="t" style="left:983px;top:583px;width:71px;text-align:center;color:#000">Weld</div>
<div class="fld" style="left:1063px;top:582px;width:57px;height:16px"></div>
<div class="t" style="left:1067px;top:585px;font-size:11px;color:#000;">100.0</div>
<div style="left:1124px;top:582px;width:11px;height:16px;border-top:1px solid #f0f0f0;border-left:1px solid #f0f0f0;border-bottom:1px solid #646464;border-right:1px solid #646464"></div>
<svg style="position:absolute;left:1126px;top:585px" width="7" height="11"><path d="M0 4L3.5 0L7 4Z M0 7L3.5 11L7 7Z" fill="#000"/></svg>
<div class="btn" style="left:983px;top:603px;width:71px;height:18px"></div>
<div class="t" style="left:983px;top:606px;width:71px;text-align:center;color:#000">Connect</div>
<div class="btn" style="left:1063px;top:603px;width:71px;height:18px"></div>
<div class="t" style="left:1063px;top:606px;width:71px;text-align:center;color:#000">Insert</div>
<div class="btn" style="left:983px;top:625px;width:71px;height:18px"></div>
<div class="t" style="left:983px;top:628px;width:71px;text-align:center;color:#000">Make First</div>
<div class="btn" style="left:1063px;top:625px;width:71px;height:18px"></div>
<div class="t" style="left:1063px;top:628px;width:71px;text-align:center;color:#000">Fuse</div>
<div class="btn" style="left:983px;top:648px;width:71px;height:18px"></div>
<div class="t" style="left:983px;top:651px;width:71px;text-align:center;color:#8c8c8c">Reverse</div>
<div class="btn" style="left:1063px;top:648px;width:71px;height:18px"></div>
<div class="t" style="left:1063px;top:651px;width:71px;text-align:center;color:#000">Cycle</div>
<div class="btn" style="left:983px;top:671px;width:71px;height:18px"></div>
<div class="t" style="left:983px;top:674px;width:71px;text-align:center;color:#000">CrossInsert</div>
<div class="fld" style="left:1063px;top:673px;width:57px;height:16px"></div>
<div class="t" style="left:1067px;top:676px;font-size:11px;color:#000;">0.1</div>
<div style="left:1124px;top:673px;width:11px;height:16px;border-top:1px solid #f0f0f0;border-left:1px solid #f0f0f0;border-bottom:1px solid #646464;border-right:1px solid #646464"></div>
<svg style="position:absolute;left:1126px;top:676px" width="7" height="11"><path d="M0 4L3.5 0L7 4Z M0 7L3.5 11L7 7Z" fill="#000"/></svg>
<div class="btn" style="left:983px;top:694px;width:71px;height:18px"></div>
<div class="t" style="left:983px;top:697px;width:71px;text-align:center;color:#000">Fillet</div>
<div class="fld" style="left:1063px;top:695px;width:57px;height:16px"></div>
<div class="t" style="left:1067px;top:698px;font-size:11px;color:#000;">0.0</div>
<div style="left:1124px;top:695px;width:11px;height:16px;border-top:1px solid #f0f0f0;border-left:1px solid #f0f0f0;border-bottom:1px solid #646464;border-right:1px solid #646464"></div>
<svg style="position:absolute;left:1126px;top:698px" width="7" height="11"><path d="M0 4L3.5 0L7 4Z M0 7L3.5 11L7 7Z" fill="#000"/></svg>
<div class="btn" style="left:983px;top:716px;width:71px;height:18px"></div>
<div class="t" style="left:983px;top:719px;width:71px;text-align:center;color:#000">Chamfer</div>
<div class="fld" style="left:1063px;top:718px;width:57px;height:16px"></div>
<div class="t" style="left:1067px;top:721px;font-size:11px;color:#000;">0.0</div>
<div style="left:1124px;top:718px;width:11px;height:16px;border-top:1px solid #f0f0f0;border-left:1px solid #f0f0f0;border-bottom:1px solid #646464;border-right:1px solid #646464"></div>
<svg style="position:absolute;left:1126px;top:721px" width="7" height="11"><path d="M0 4L3.5 0L7 4Z M0 7L3.5 11L7 7Z" fill="#000"/></svg>
<div class="btn" style="left:983px;top:739px;width:71px;height:18px"></div>
<div class="t" style="left:983px;top:742px;width:71px;text-align:center;color:#8c8c8c">Outline</div>
<div class="fld" style="left:1063px;top:740px;width:57px;height:16px"></div>
<div class="t" style="left:1067px;top:743px;font-size:11px;color:#8c8c8c;">0.0</div>
<div style="left:1124px;top:740px;width:11px;height:16px;border-top:1px solid #f0f0f0;border-left:1px solid #f0f0f0;border-bottom:1px solid #646464;border-right:1px solid #646464"></div>
<svg style="position:absolute;left:1126px;top:743px" width="7" height="11"><path d="M0 4L3.5 0L7 4Z M0 7L3.5 11L7 7Z" fill="#000"/></svg>
<div style="left:1063px;top:763px;width:13px;height:13px;background:#c8c8c8;border-top:2px solid #5a5a5a;border-left:2px solid #5a5a5a;border-bottom:1px solid #f0f0f0;border-right:1px solid #f0f0f0"></div>
<div class="t" style="left:1082px;top:765px;font-size:11px;color:#8c8c8c;">Center</div>
<div style="left:0;top:739px;width:968px;height:17px;background:#bebebe"></div>
<div style="left:0;top:756px;width:968px;height:1px;background:#f0f0f0"></div>
<div style="left:0;top:757px;width:968px;height:1px;background:#dadada"></div>
<div style="left:0;top:758px;width:968px;height:1px;background:#6e6e6e"></div>
<div style="left:0;top:739px;width:16px;height:17px;background:#c8c8c8;border-top:1px solid #f0f0f0;border-left:1px solid #f0f0f0;border-bottom:1px solid #6e6e6e;border-right:1px solid #6e6e6e"></div>
<svg style="position:absolute;left:4px;top:743px" width="6" height="10"><path d="M4.5 1L1 4.5L4.5 8" fill="none" stroke="#000" stroke-width="1.1"/></svg>
<div style="left:16px;top:739px;width:125px;height:17px;background:#c8c8c8;border-top:1px solid #f0f0f0;border-left:1px solid #f0f0f0;border-bottom:1px solid #000;border-right:1px solid #000;box-shadow:inset -1px -1px 0 #808080"></div>
<div class="t" style="left:62px;top:743px;font-size:11px;color:#000;">0 / 100</div>
<div style="left:141px;top:739px;width:16px;height:17px;background:#c8c8c8;border-top:1px solid #f0f0f0;border-left:1px solid #f0f0f0;border-bottom:1px solid #6e6e6e;border-right:1px solid #6e6e6e"></div>
<svg style="position:absolute;left:146px;top:743px" width="6" height="10"><path d="M0.5 1L4 4.5L0.5 8" fill="none" stroke="#000" stroke-width="1.1"/></svg>
<div style="left:0;top:759px;width:968px;height:25px;background:#c8c8c8"></div>
<div style="left:50px;top:759px;width:867px;height:25px;background:conic-gradient(#dcdcdc 25%,#c6c6c6 0 50%,#dcdcdc 0 75%,#c6c6c6 0) 0 0/2px 2px"></div>
<div style="left:50px;top:758px;width:867px;height:1px;background:#6e6e6e"></div>
<div style="left:50px;top:758px;width:9px;height:26px;background:#8eb0d2;border:1px solid #6a7a8a"></div>
<div style="left:54px;top:759px;width:1px;height:24px;background:#4a6a8a"></div>
<svg style="position:absolute;left:50px;top:758px" width="880" height="26" shape-rendering="crispEdges"><rect x="13" y="1" width="1" height="11" fill="#6e6e6e"/><rect x="21" y="1" width="1" height="11" fill="#6e6e6e"/><rect x="30" y="1" width="1" height="11" fill="#6e6e6e"/><rect x="38" y="1" width="1" height="11" fill="#6e6e6e"/><rect x="47" y="1" width="1" height="11" fill="#6e6e6e"/><rect x="56" y="1" width="1" height="11" fill="#6e6e6e"/><rect x="64" y="1" width="1" height="11" fill="#6e6e6e"/><rect x="73" y="1" width="1" height="11" fill="#6e6e6e"/><rect x="81" y="1" width="1" height="11" fill="#6e6e6e"/><rect x="90" y="1" width="1" height="24" fill="#6e6e6e"/><rect x="99" y="1" width="1" height="11" fill="#6e6e6e"/><rect x="107" y="1" width="1" height="11" fill="#6e6e6e"/><rect x="116" y="1" width="1" height="11" fill="#6e6e6e"/><rect x="124" y="1" width="1" height="11" fill="#6e6e6e"/><rect x="133" y="1" width="1" height="11" fill="#6e6e6e"/><rect x="142" y="1" width="1" height="11" fill="#6e6e6e"/><rect x="150" y="1" width="1" height="11" fill="#6e6e6e"/><rect x="159" y="1" width="1" height="11" fill="#6e6e6e"/><rect x="167" y="1" width="1" height="11" fill="#6e6e6e"/><rect x="176" y="1" width="1" height="24" fill="#6e6e6e"/><rect x="185" y="1" width="1" height="11" fill="#6e6e6e"/><rect x="193" y="1" width="1" height="11" fill="#6e6e6e"/><rect x="202" y="1" width="1" height="11" fill="#6e6e6e"/><rect x="210" y="1" width="1" height="11" fill="#6e6e6e"/><rect x="219" y="1" width="1" height="11" fill="#6e6e6e"/><rect x="228" y="1" width="1" height="11" fill="#6e6e6e"/><rect x="236" y="1" width="1" height="11" fill="#6e6e6e"/><rect x="245" y="1" width="1" height="11" fill="#6e6e6e"/><rect x="253" y="1" width="1" height="11" fill="#6e6e6e"/><rect x="262" y="1" width="1" height="24" fill="#6e6e6e"/><rect x="271" y="1" width="1" height="11" fill="#6e6e6e"/><rect x="279" y="1" width="1" height="11" fill="#6e6e6e"/><rect x="288" y="1" width="1" height="11" fill="#6e6e6e"/><rect x="296" y="1" width="1" height="11" fill="#6e6e6e"/><rect x="305" y="1" width="1" height="11" fill="#6e6e6e"/><rect x="314" y="1" width="1" height="11" fill="#6e6e6e"/><rect x="322" y="1" width="1" height="11" fill="#6e6e6e"/><rect x="331" y="1" width="1" height="11" fill="#6e6e6e"/><rect x="339" y="1" width="1" height="11" fill="#6e6e6e"/><rect x="348" y="1" width="1" height="24" fill="#6e6e6e"/><rect x="357" y="1" width="1" height="11" fill="#6e6e6e"/><rect x="365" y="1" width="1" height="11" fill="#6e6e6e"/><rect x="374" y="1" width="1" height="11" fill="#6e6e6e"/><rect x="382" y="1" width="1" height="11" fill="#6e6e6e"/><rect x="391" y="1" width="1" height="11" fill="#6e6e6e"/><rect x="400" y="1" width="1" height="11" fill="#6e6e6e"/><rect x="408" y="1" width="1" height="11" fill="#6e6e6e"/><rect x="417" y="1" width="1" height="11" fill="#6e6e6e"/><rect x="425" y="1" width="1" height="11" fill="#6e6e6e"/><rect x="434" y="1" width="1" height="24" fill="#6e6e6e"/><rect x="443" y="1" width="1" height="11" fill="#6e6e6e"/><rect x="451" y="1" width="1" height="11" fill="#6e6e6e"/><rect x="460" y="1" width="1" height="11" fill="#6e6e6e"/><rect x="468" y="1" width="1" height="11" fill="#6e6e6e"/><rect x="477" y="1" width="1" height="11" fill="#6e6e6e"/><rect x="486" y="1" width="1" height="11" fill="#6e6e6e"/><rect x="494" y="1" width="1" height="11" fill="#6e6e6e"/><rect x="503" y="1" width="1" height="11" fill="#6e6e6e"/><rect x="511" y="1" width="1" height="11" fill="#6e6e6e"/><rect x="520" y="1" width="1" height="24" fill="#6e6e6e"/><rect x="529" y="1" width="1" height="11" fill="#6e6e6e"/><rect x="537" y="1" width="1" height="11" fill="#6e6e6e"/><rect x="546" y="1" width="1" height="11" fill="#6e6e6e"/><rect x="554" y="1" width="1" height="11" fill="#6e6e6e"/><rect x="563" y="1" width="1" height="11" fill="#6e6e6e"/><rect x="572" y="1" width="1" height="11" fill="#6e6e6e"/><rect x="580" y="1" width="1" height="11" fill="#6e6e6e"/><rect x="589" y="1" width="1" height="11" fill="#6e6e6e"/><rect x="597" y="1" width="1" height="11" fill="#6e6e6e"/><rect x="606" y="1" width="1" height="24" fill="#6e6e6e"/><rect x="615" y="1" width="1" height="11" fill="#6e6e6e"/><rect x="623" y="1" width="1" height="11" fill="#6e6e6e"/><rect x="632" y="1" width="1" height="11" fill="#6e6e6e"/><rect x="640" y="1" width="1" height="11" fill="#6e6e6e"/><rect x="649" y="1" width="1" height="11" fill="#6e6e6e"/><rect x="658" y="1" width="1" height="11" fill="#6e6e6e"/><rect x="666" y="1" width="1" height="11" fill="#6e6e6e"/><rect x="675" y="1" width="1" height="11" fill="#6e6e6e"/><rect x="683" y="1" width="1" height="11" fill="#6e6e6e"/><rect x="692" y="1" width="1" height="24" fill="#6e6e6e"/><rect x="701" y="1" width="1" height="11" fill="#6e6e6e"/><rect x="709" y="1" width="1" height="11" fill="#6e6e6e"/><rect x="718" y="1" width="1" height="11" fill="#6e6e6e"/><rect x="726" y="1" width="1" height="11" fill="#6e6e6e"/><rect x="735" y="1" width="1" height="11" fill="#6e6e6e"/><rect x="744" y="1" width="1" height="11" fill="#6e6e6e"/><rect x="752" y="1" width="1" height="11" fill="#6e6e6e"/><rect x="761" y="1" width="1" height="11" fill="#6e6e6e"/><rect x="769" y="1" width="1" height="11" fill="#6e6e6e"/><rect x="778" y="1" width="1" height="24" fill="#6e6e6e"/><rect x="787" y="1" width="1" height="11" fill="#6e6e6e"/><rect x="795" y="1" width="1" height="11" fill="#6e6e6e"/><rect x="804" y="1" width="1" height="11" fill="#6e6e6e"/><rect x="812" y="1" width="1" height="11" fill="#6e6e6e"/><rect x="821" y="1" width="1" height="11" fill="#6e6e6e"/><rect x="830" y="1" width="1" height="11" fill="#6e6e6e"/><rect x="838" y="1" width="1" height="11" fill="#6e6e6e"/><rect x="847" y="1" width="1" height="11" fill="#6e6e6e"/><rect x="855" y="1" width="1" height="11" fill="#6e6e6e"/><rect x="864" y="1" width="1" height="24" fill="#6e6e6e"/></svg>
<div class="t" style="left:51px;top:772px;font-size:11px;color:#1a2a3a;">0</div>
<div class="t" style="left:134px;top:772px;width:12px;text-align:center;font-size:11px;background:transparent">10</div>
<div class="t" style="left:220px;top:772px;width:12px;text-align:center;font-size:11px;background:transparent">20</div>
<div class="t" style="left:306px;top:772px;width:12px;text-align:center;font-size:11px;background:transparent">30</div>
<div class="t" style="left:392px;top:772px;width:12px;text-align:center;font-size:11px;background:transparent">40</div>
<div class="t" style="left:478px;top:772px;width:12px;text-align:center;font-size:11px;background:transparent">50</div>
<div class="t" style="left:564px;top:772px;width:12px;text-align:center;font-size:11px;background:transparent">60</div>
<div class="t" style="left:650px;top:772px;width:12px;text-align:center;font-size:11px;background:transparent">70</div>
<div class="t" style="left:736px;top:772px;width:12px;text-align:center;font-size:11px;background:transparent">80</div>
<div class="t" style="left:822px;top:772px;width:12px;text-align:center;font-size:11px;background:transparent">90</div>
<div class="t" style="left:905px;top:772px;width:18px;text-align:center;font-size:11px;background:transparent">100</div>
<svg style="position:absolute;left:13px;top:763px" width="18" height="16"><rect x="0.5" y="0.5" width="17" height="5" fill="#e8e8e8" stroke="#000"/><path d="M3 3Q6 1 9 3T15 3" fill="none" stroke="#000" stroke-width="0.8"/><path d="M4 12V7M2 9L4 7L6 9M13 7V12M11 10L13 12L15 10" fill="none" stroke="#000" stroke-width="1"/><rect x="0.5" y="12.5" width="17" height="3" fill="#fff" stroke="#000"/></svg>
<div style="left:0;top:784px;width:1152px;height:50px;background:#c8c8c8"></div>
<div style="left:0;top:783px;width:968px;height:1px;background:#f0f0f0"></div>
<div style="left:2px;top:786px;width:97px;height:22px;background:#dcc8c8;border-top:2px solid #7a7460;border-left:2px solid #7a7460;border-bottom:1px solid #fff;border-right:1px solid #fff"></div>
<div style="left:2px;top:809px;width:97px;height:23px;background:#fff;border-top:2px solid #7a7460;border-left:2px solid #7a7460;border-bottom:1px solid #fff;border-right:1px solid #fff"></div>
<div style="left:101px;top:786px;width:1px;height:48px;background:#f0f0f0"></div>
<div style="left:103px;top:786px;width:1px;height:48px;background:#7a7a7a"></div>
<div class="sunk" style="left:107px;top:788px;width:200px;height:21px"></div>
<div class="t" style="left:114px;top:794px;font-size:11px;color:#000;">1 Shape Selected</div>
<div class="sunk" style="left:107px;top:813px;width:500px;height:22px;border-bottom:none;border-right-color:#f0f0f0"></div>
<div class="t" style="left:114px;top:819px;font-size:11px;color:#000;">Rendering Time &nbsp;0:00:00</div>
<svg style="position:absolute;left:315px;top:790px" width="10" height="14"><path d="M2 6V4A3 3 0 0 1 8 4V6" fill="none" stroke="#000" stroke-width="1.3"/><rect x="1" y="6" width="8" height="7" fill="#000"/><rect x="1" y="8" width="8" height="1" fill="#c8c8c8"/><rect x="1" y="10" width="8" height="1" fill="#c8c8c8"/></svg>
<svg style="position:absolute;left:340px;top:790px" width="16" height="16"><rect x="0.5" y="0.5" width="14" height="14" fill="none" stroke="#000"/><path d="M7.5 1V14M1 7.5H14" stroke="#606060" stroke-width="0.5"/><circle cx="7.5" cy="7.5" r="2.2" fill="#606060" stroke="#000" stroke-width="0.9"/></svg>
<div class="t" style="left:362px;top:794px;font-size:11px;color:#000;">X:</div>
<div class="fld" style="left:373px;top:788px;width:58px;height:21px"></div>
<div class="t" style="left:377px;top:794px;font-size:11px;color:#8c8c8c;">14.73</div>
<div class="t" style="left:444px;top:794px;font-size:11px;color:#000;">Y:</div>
<div class="fld" style="left:455px;top:788px;width:58px;height:21px"></div>
<div class="t" style="left:459px;top:794px;font-size:11px;color:#8c8c8c;">18.05</div>
<div class="t" style="left:526px;top:794px;font-size:11px;color:#000;">Z:</div>
<div class="fld" style="left:537px;top:788px;width:58px;height:21px"></div>
<div class="t" style="left:541px;top:794px;font-size:11px;color:#8c8c8c;">0.0</div>
<div class="sunk" style="left:609px;top:788px;width:100px;height:21px"></div>
<div class="t" style="left:615px;top:794px;font-size:11px;color:#000;">Grid = 10.0</div>
<div class="sunk" style="left:609px;top:813px;width:100px;height:22px;border-bottom:none"></div>
<div class="t" style="left:615px;top:819px;font-size:11px;color:#000;">Add Time Tag</div>
<div class="btn" style="left:710px;top:787px;width:44px;height:44px"></div>
<svg style="position:absolute;left:720px;top:802px" width="24" height="12"><circle cx="5" cy="6" r="3.8" fill="none" stroke="#000" stroke-width="2"/><rect x="8.5" y="4.5" width="14" height="3" fill="#000"/><rect x="16" y="7" width="2" height="3" fill="#000"/><rect x="20" y="7" width="2" height="3" fill="#000"/></svg>
<div class="btn" style="left:757px;top:787px;width:48px;height:22px"></div>
<div class="t" style="left:760px;top:793px;font-size:11px;color:#000;">Auto Key</div>
<div class="btn" style="left:757px;top:809px;width:48px;height:22px"></div>
<div class="t" style="left:763px;top:816px;font-size:11px;color:#000;">Set Key</div>
<div style="left:808px;top:787px;width:115px;height:20px;background:#e6e6e6;border-top:2px solid #606060;border-left:2px solid #606060;border-bottom:1px solid #f0f0f0;border-right:1px solid #f0f0f0"></div>
<div class="t" style="left:812px;top:793px;font-size:11px;color:#000;">Selected</div>
<div style="left:905px;top:789px;width:17px;height:17px;background:#ece9d8;border-top:1px solid #fff;border-left:1px solid #fff;border-bottom:1px solid #8a8674;border-right:1px solid #8a8674"></div>
<svg style="position:absolute;left:909px;top:795px" width="9" height="5"><path d="M0 0H9L4.5 5Z" fill="#000"/></svg>
<div class="btn" style="left:808px;top:810px;width:115px;height:21px"></div>
<div class="t" style="left:808px;top:815px;width:115px;text-align:center">Key Filters...</div>
<svg style="position:absolute;left:931px;top:792px" width="18" height="11"><g fill="#000"><rect x="0" y="1" width="2" height="9"/><path d="M2 5.5L9 1V10Z"/><path d="M9 5.5L16 1V10Z"/><rect x="16" y="1" width="1.5" height="9"/></g></svg>
<div style="left:953px;top:790px;width:2px;height:18px;border-left:1px solid #7a7a7a;border-right:1px solid #f0f0f0"></div>
<svg style="position:absolute;left:959px;top:792px" width="15" height="11"><g fill="#000"><path d="M0 5.5L6 1V10Z"/><rect x="7" y="1" width="2" height="9"/><rect x="10" y="1" width="2" height="9"/><rect x="13" y="1" width="2" height="9"/></g></svg>
<div style="left:980px;top:790px;width:17px;height:15px;border:2px solid #000"></div>
<svg style="position:absolute;left:985px;top:794px" width="8" height="8"><path d="M0 0L7 3.5L0 7Z" fill="#000"/></svg>
<svg style="position:absolute;left:995px;top:803px" width="5" height="5"><path d="M4.5 0.5V4.5H0.5Z" fill="#000" stroke="#fff" stroke-width="0.7"/></svg>
<svg style="position:absolute;left:1004px;top:792px" width="15" height="11"><g fill="#000"><rect x="0" y="1" width="2" height="9"/><rect x="3" y="1" width="2" height="9"/><rect x="6" y="1" width="2" height="9"/><path d="M9 1L15 5.5L9 10Z"/></g></svg>
<div style="left:1025px;top:790px;width:2px;height:18px;border-left:1px solid #7a7a7a;border-right:1px solid #f0f0f0"></div>
<svg style="position:absolute;left:1029px;top:792px" width="18" height="11"><g fill="#000"><rect x="0" y="1" width="1.5" height="9"/><path d="M1.5 1L8.5 5.5L1.5 10Z"/><path d="M8.5 1L15.5 5.5L8.5 10Z"/><rect x="15.5" y="1" width="2" height="9"/></g></svg>
<div style="left:1054px;top:790px;width:2px;height:18px;border-left:1px solid #7a7a7a;border-right:1px solid #f0f0f0"></div>
<svg style="position:absolute;left:1059px;top:789px" width="17" height="17"><circle cx="6.5" cy="6.5" r="5" fill="#e8f0ff" stroke="#1a2a80" stroke-width="1.6"/><path d="M10 10L15.5 15.5" stroke="#1a2a80" stroke-width="2.6"/></svg>
<svg style="position:absolute;left:1081px;top:789px" width="19" height="18"><rect x="6.5" y="0.5" width="12" height="11" fill="none" stroke="#a02020" stroke-width="1.2"/><path d="M12.5 0V12M6 6H19" stroke="#a02020" stroke-width="1.2"/><circle cx="6" cy="11" r="4" fill="#e8f0ff" stroke="#1a2a80" stroke-width="1.4"/><path d="M9 14L12 17" stroke="#1a2a80" stroke-width="2.2"/></svg>
<svg style="position:absolute;left:1104px;top:789px" width="19" height="18"><path d="M1 4V1H4M15 1H18V4M18 13V16H15M4 16H1V13" fill="none" stroke="#000" stroke-width="1.2"/><path d="M4 6L7 3H15V11L12 14H4Z M4 6H12V14M12 6L15 3" fill="#e0e8ff" stroke="#1a2a80" stroke-width="1.2"/></svg>
<svg style="position:absolute;left:1119px;top:803px" width="5" height="5"><path d="M4.5 0.5V4.5H0.5Z" fill="#000" stroke="#fff" stroke-width="0.7"/></svg>
<svg style="position:absolute;left:1127px;top:789px" width="19" height="18"><rect x="6.5" y="0.5" width="12" height="11" fill="none" stroke="#a02020" stroke-width="1.2"/><path d="M12.5 0V12M6 6H19" stroke="#a02020" stroke-width="1.2"/><path d="M1 9L4 6H11V13L8 16H1Z M1 9H8V16M8 9L11 6" fill="#e0e8ff" stroke="#1a2a80" stroke-width="1.2"/></svg>
<svg style="position:absolute;left:1142px;top:803px" width="5" height="5"><path d="M4.5 0.5V4.5H0.5Z" fill="#000" stroke="#fff" stroke-width="0.7"/></svg>
<svg style="position:absolute;left:933px;top:814px" width="15" height="11"><g fill="#000"><rect x="0" y="1" width="1.5" height="9"/><path d="M1.5 5.5L7 1.5V9.5Z"/><path d="M7.5 5.5L13 1.5V9.5Z"/><rect x="13" y="1" width="1.5" height="9"/></g></svg>
<div style="left:953px;top:812px;width:2px;height:18px;border-left:1px solid #7a7a7a;border-right:1px solid #f0f0f0"></div>
<div class="fld" style="left:955px;top:810px;width:64px;height:20px"></div>
<div class="t" style="left:959px;top:816px;font-size:11px;color:#000;">0</div>
<div style="left:1019px;top:810px;width:11px;height:20px;border-top:1px solid #f0f0f0;border-left:1px solid #f0f0f0;border-bottom:1px solid #646464;border-right:1px solid #646464"></div>
<svg style="position:absolute;left:1021px;top:814px" width="7" height="13"><path d="M0 4.5L3.5 0L7 4.5Z M0 8.5L3.5 13L7 8.5Z" fill="#000"/></svg>
<svg style="position:absolute;left:1035px;top:811px" width="15" height="16"><rect x="0.5" y="1.5" width="11" height="11" fill="#fff" stroke="#303030"/><rect x="1" y="2" width="10" height="2" fill="#a0a0a0"/><circle cx="10" cy="10.5" r="4.2" fill="#fff" stroke="#c02020" stroke-width="1.2"/><path d="M10 8V11H12" stroke="#c02020" stroke-width="1" fill="none"/></svg>
<div style="left:1054px;top:812px;width:2px;height:18px;border-left:1px solid #7a7a7a;border-right:1px solid #f0f0f0"></div>
<svg style="position:absolute;left:1058px;top:811px" width="18" height="16"><rect x="0.5" y="0.5" width="16" height="15" fill="none" stroke="#000" stroke-dasharray="2 1"/><circle cx="7" cy="6.5" r="3.8" fill="#e8f0ff" stroke="#1a2a80" stroke-width="1.4"/><path d="M9.5 9L13 12.5" stroke="#1a2a80" stroke-width="2.2"/></svg>
<svg style="position:absolute;left:1081px;top:810px" width="18" height="18"><path d="M4 16Q1 12 2 8L4 9V4Q5 2 6 4V8V2Q7 0 8.5 2V8V1.5Q10 0 11 2V8V3Q12.5 2 13 4V11Q13 15 10 17Z" fill="#f0f0f0" stroke="#202020" stroke-width="1"/></svg>
<svg style="position:absolute;left:1104px;top:810px" width="19" height="18"><circle cx="9.5" cy="10" r="6" fill="none" stroke="#1a2a80" stroke-width="1.2"/><path d="M9.5 1V10L3 15M9.5 10L17 13" stroke="#202020" stroke-width="1.2"/><path d="M7 3L9.5 0L12 3Z" fill="#000"/><ellipse cx="9.5" cy="10" rx="6" ry="2.5" fill="none" stroke="#1a2a80" stroke-width="1"/></svg>
<svg style="position:absolute;left:1119px;top:825px" width="5" height="5"><path d="M4.5 0.5V4.5H0.5Z" fill="#000" stroke="#fff" stroke-width="0.7"/></svg>
<svg style="position:absolute;left:1127px;top:810px" width="18" height="18"><rect x="0.5" y="0.5" width="12" height="12" fill="none" stroke="#1a2a80" stroke-width="1.3"/><rect x="5.5" y="5.5" width="12" height="12" fill="none" stroke="#1a2a80" stroke-width="1.3"/><path d="M3 3L9 9M3 3V6M3 3H6" stroke="#000" stroke-width="1"/></svg>
<div style="left:0;top:834px;width:93px;height:2px;background:#3c9a3c"></div>
<div style="left:93px;top:834px;width:1059px;height:2px;background:#2060e0"></div>
</body></html>
